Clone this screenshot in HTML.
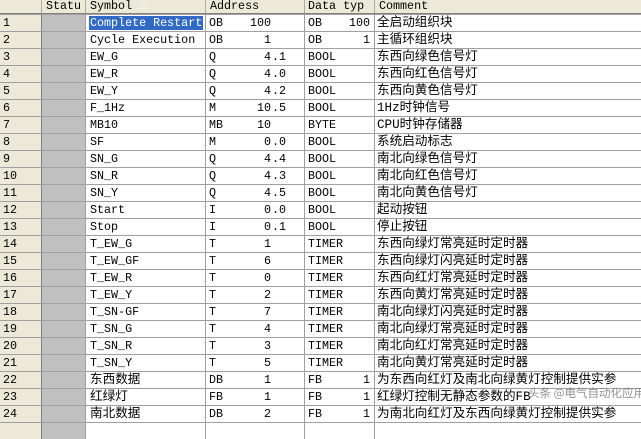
<!DOCTYPE html>
<html><head><meta charset="utf-8"><style>
*{margin:0;padding:0;box-sizing:border-box}
body{width:641px;height:424px;overflow:hidden;background:#fff;font-family:"Liberation Mono","Noto Sans CJK SC",monospace;font-size:11.7px;color:#000;position:relative}
.r{position:absolute;left:0;width:641px;height:17px;border-top:1px solid #a0a0a0;line-height:16px}
.c{position:absolute;top:0;height:16px;border-right:1px solid #a0a0a0;white-space:nowrap;overflow:hidden}
.n{left:0;width:42px;background:#ece9d8;padding-left:3px;border-right:1px solid #808080}
.s{left:42px;width:44px;background:#c0c0c0}
.y{left:86px;width:120px;padding-left:4px}
.a{left:206px;width:99px}
.d{left:305px;width:70px}
.m{left:375px;width:266px;padding-left:2px;border-right:none;font-size:12.6px}
.a b,.d b{font-weight:normal;position:absolute;left:3px}
.a i{font-style:normal;position:absolute;right:33px}
.a u{text-decoration:none;position:absolute;left:66px}
.d i{font-style:normal;position:absolute;right:4px}
.h{position:absolute;top:0;left:0;width:641px;height:14px;background:#ece9d8;border-bottom:1px solid #808080;line-height:13px}
.h div{position:absolute;top:0;height:13px;border-right:1px solid #b0ad9c;padding-left:4px}
.sel{background:#316ac5;color:#fff;padding:0 1px;margin-left:-1px}
.wm{position:absolute;left:528px;top:386px;color:rgba(110,110,110,.75);font-family:"Noto Sans CJK SC",sans-serif;font-size:11.5px;white-space:nowrap;line-height:14px}
</style></head><body>
<div class="h">
<div style="left:0;width:42px"></div>
<div style="left:42px;width:44px">Statu</div>
<div style="left:86px;width:120px">Symbol <span style="color:#fff;font-size:9px">△</span></div>
<div style="left:206px;width:99px">Address</div>
<div style="left:305px;width:70px;padding-left:3px">Data typ</div>
<div style="left:375px;width:266px;border:none">Comment</div>
</div>

<div class="r" style="top:14px"><div class="c n">1</div><div class="c s"></div><div class="c y"><span class="sel">Complete Restart</span></div><div class="c a"><b>OB</b><i>100</i></div><div class="c d"><b>OB</b><i>100</i></div><div class="c m">全启动组织块</div></div>
<div class="r" style="top:31px"><div class="c n">2</div><div class="c s"></div><div class="c y">Cycle Execution</div><div class="c a"><b>OB</b><i>1</i></div><div class="c d"><b>OB</b><i>1</i></div><div class="c m">主循环组织块</div></div>
<div class="r" style="top:48px"><div class="c n">3</div><div class="c s"></div><div class="c y">EW_G</div><div class="c a"><b>Q</b><i>4</i><u>.1</u></div><div class="c d"><b>BOOL</b></div><div class="c m">东西向绿色信号灯</div></div>
<div class="r" style="top:65px"><div class="c n">4</div><div class="c s"></div><div class="c y">EW_R</div><div class="c a"><b>Q</b><i>4</i><u>.0</u></div><div class="c d"><b>BOOL</b></div><div class="c m">东西向红色信号灯</div></div>
<div class="r" style="top:82px"><div class="c n">5</div><div class="c s"></div><div class="c y">EW_Y</div><div class="c a"><b>Q</b><i>4</i><u>.2</u></div><div class="c d"><b>BOOL</b></div><div class="c m">东西向黄色信号灯</div></div>
<div class="r" style="top:99px"><div class="c n">6</div><div class="c s"></div><div class="c y">F_1Hz</div><div class="c a"><b>M</b><i>10</i><u>.5</u></div><div class="c d"><b>BOOL</b></div><div class="c m">1Hz时钟信号</div></div>
<div class="r" style="top:116px"><div class="c n">7</div><div class="c s"></div><div class="c y">MB10</div><div class="c a"><b>MB</b><i>10</i></div><div class="c d"><b>BYTE</b></div><div class="c m">CPU时钟存储器</div></div>
<div class="r" style="top:133px"><div class="c n">8</div><div class="c s"></div><div class="c y">SF</div><div class="c a"><b>M</b><i>0</i><u>.0</u></div><div class="c d"><b>BOOL</b></div><div class="c m">系统启动标志</div></div>
<div class="r" style="top:150px"><div class="c n">9</div><div class="c s"></div><div class="c y">SN_G</div><div class="c a"><b>Q</b><i>4</i><u>.4</u></div><div class="c d"><b>BOOL</b></div><div class="c m">南北向绿色信号灯</div></div>
<div class="r" style="top:167px"><div class="c n">10</div><div class="c s"></div><div class="c y">SN_R</div><div class="c a"><b>Q</b><i>4</i><u>.3</u></div><div class="c d"><b>BOOL</b></div><div class="c m">南北向红色信号灯</div></div>
<div class="r" style="top:184px"><div class="c n">11</div><div class="c s"></div><div class="c y">SN_Y</div><div class="c a"><b>Q</b><i>4</i><u>.5</u></div><div class="c d"><b>BOOL</b></div><div class="c m">南北向黄色信号灯</div></div>
<div class="r" style="top:201px"><div class="c n">12</div><div class="c s"></div><div class="c y">Start</div><div class="c a"><b>I</b><i>0</i><u>.0</u></div><div class="c d"><b>BOOL</b></div><div class="c m">起动按钮</div></div>
<div class="r" style="top:218px"><div class="c n">13</div><div class="c s"></div><div class="c y">Stop</div><div class="c a"><b>I</b><i>0</i><u>.1</u></div><div class="c d"><b>BOOL</b></div><div class="c m">停止按钮</div></div>
<div class="r" style="top:235px"><div class="c n">14</div><div class="c s"></div><div class="c y">T_EW_G</div><div class="c a"><b>T</b><i>1</i></div><div class="c d"><b>TIMER</b></div><div class="c m">东西向绿灯常亮延时定时器</div></div>
<div class="r" style="top:252px"><div class="c n">15</div><div class="c s"></div><div class="c y">T_EW_GF</div><div class="c a"><b>T</b><i>6</i></div><div class="c d"><b>TIMER</b></div><div class="c m">东西向绿灯闪亮延时定时器</div></div>
<div class="r" style="top:269px"><div class="c n">16</div><div class="c s"></div><div class="c y">T_EW_R</div><div class="c a"><b>T</b><i>0</i></div><div class="c d"><b>TIMER</b></div><div class="c m">东西向红灯常亮延时定时器</div></div>
<div class="r" style="top:286px"><div class="c n">17</div><div class="c s"></div><div class="c y">T_EW_Y</div><div class="c a"><b>T</b><i>2</i></div><div class="c d"><b>TIMER</b></div><div class="c m">东西向黄灯常亮延时定时器</div></div>
<div class="r" style="top:303px"><div class="c n">18</div><div class="c s"></div><div class="c y">T_SN-GF</div><div class="c a"><b>T</b><i>7</i></div><div class="c d"><b>TIMER</b></div><div class="c m">南北向绿灯闪亮延时定时器</div></div>
<div class="r" style="top:320px"><div class="c n">19</div><div class="c s"></div><div class="c y">T_SN_G</div><div class="c a"><b>T</b><i>4</i></div><div class="c d"><b>TIMER</b></div><div class="c m">南北向绿灯常亮延时定时器</div></div>
<div class="r" style="top:337px"><div class="c n">20</div><div class="c s"></div><div class="c y">T_SN_R</div><div class="c a"><b>T</b><i>3</i></div><div class="c d"><b>TIMER</b></div><div class="c m">南北向红灯常亮延时定时器</div></div>
<div class="r" style="top:354px"><div class="c n">21</div><div class="c s"></div><div class="c y">T_SN_Y</div><div class="c a"><b>T</b><i>5</i></div><div class="c d"><b>TIMER</b></div><div class="c m">南北向黄灯常亮延时定时器</div></div>
<div class="r" style="top:371px"><div class="c n">22</div><div class="c s"></div><div class="c y" style="font-size:12.6px">东西数据</div><div class="c a"><b>DB</b><i>1</i></div><div class="c d"><b>FB</b><i>1</i></div><div class="c m">为东西向红灯及南北向绿黄灯控制提供实参</div></div>
<div class="r" style="top:388px"><div class="c n">23</div><div class="c s"></div><div class="c y" style="font-size:12.6px">红绿灯</div><div class="c a"><b>FB</b><i>1</i></div><div class="c d"><b>FB</b><i>1</i></div><div class="c m">红绿灯控制无静态参数的FB</div></div>
<div class="r" style="top:405px"><div class="c n">24</div><div class="c s"></div><div class="c y" style="font-size:12.6px">南北数据</div><div class="c a"><b>DB</b><i>2</i></div><div class="c d"><b>FB</b><i>1</i></div><div class="c m">为南北向红灯及东西向绿黄灯控制提供实参</div></div>
<div class="r" style="top:422px"><div class="c n"></div><div class="c s"></div><div class="c y"></div><div class="c a"></div><div class="c d"></div></div>
<div class="wm">头条 @电气自动化应用</div>
</body></html>
